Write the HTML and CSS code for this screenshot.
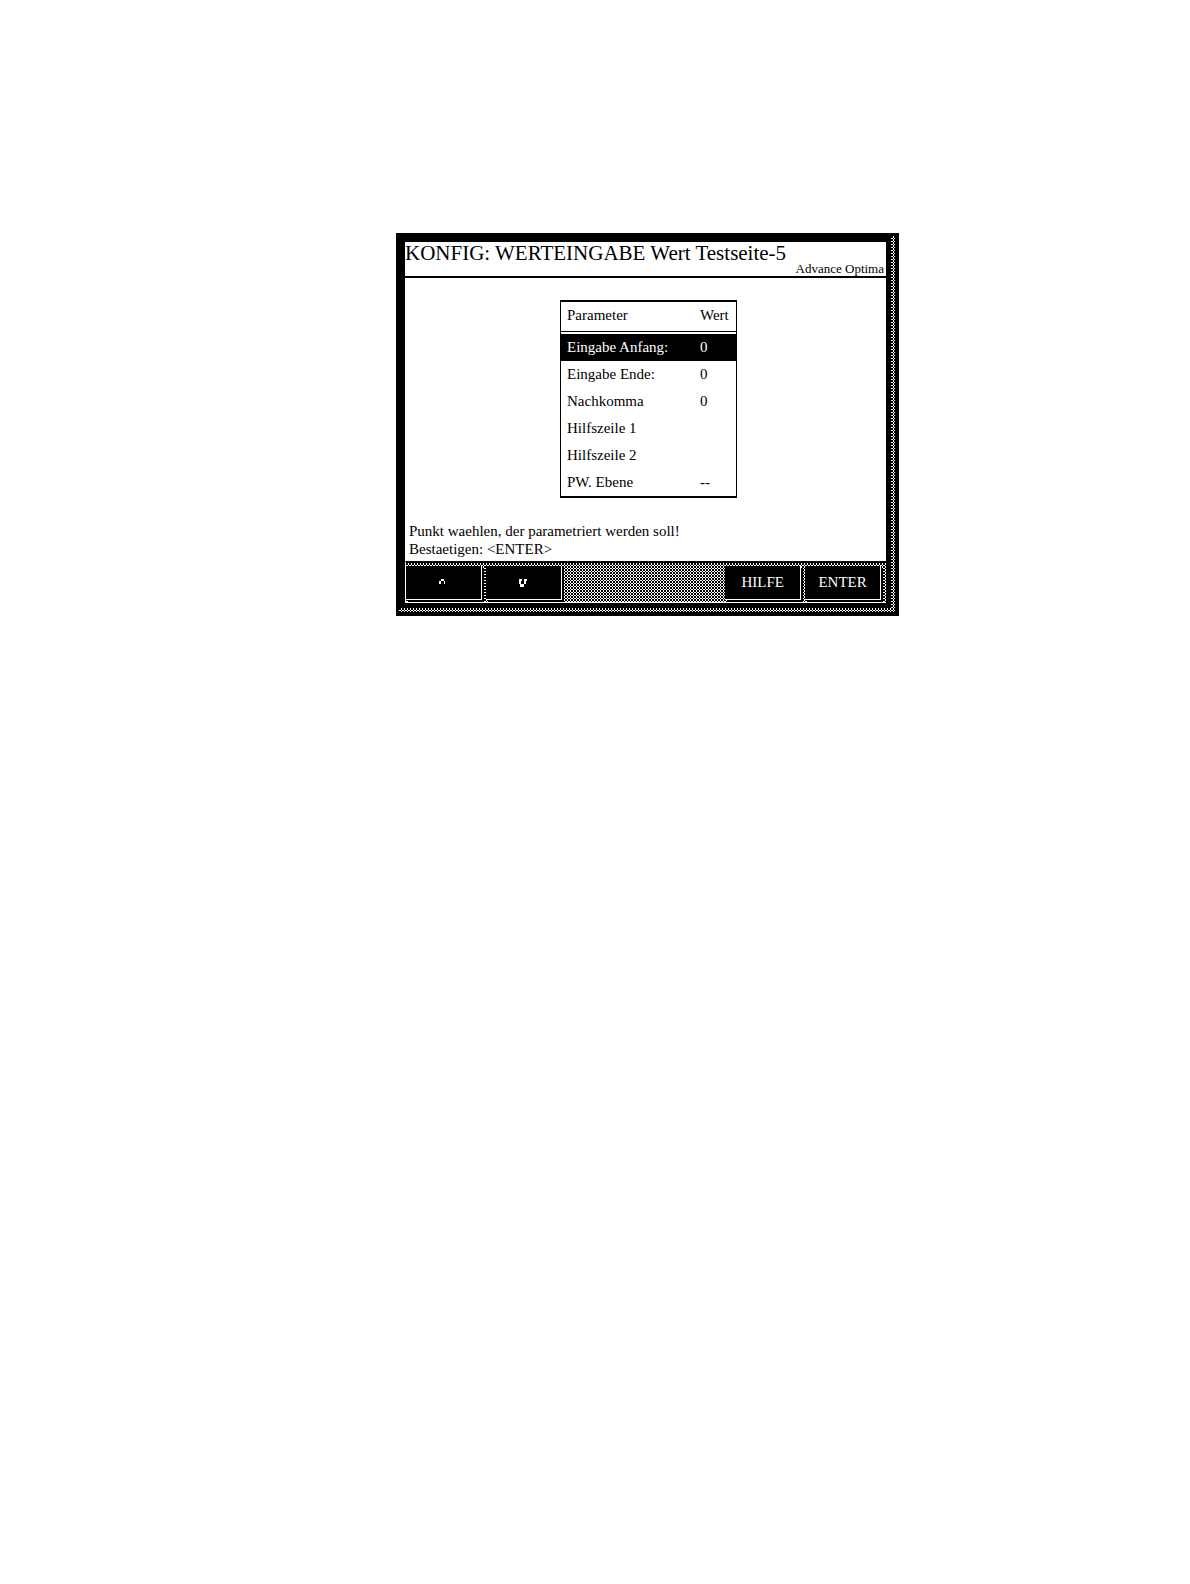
FILE: index.html
```
<!DOCTYPE html>
<html lang="de">
<head>
  <meta charset="UTF-8" />
  <meta name="viewport" content="width=device-width, initial-scale=1.0"/>
  <title>KONFIG: WERTEINGABE</title>
  <link rel="stylesheet" href="styles.css">
</head>
<body>
  <main class="terminal">
    <div class="bezel">
      <div class="screen">
        <header class="titlebar">
          <h1>KONFIG: WERTEINGABE Wert Testseite-5</h1>
          <span class="brand">Advance Optima</span>
        </header>

        <section class="content">
          <table class="params">
            <thead>
              <tr><th scope="col">Parameter</th><th scope="col">Wert</th></tr>
            </thead>
            <tbody>
              <tr class="selected"><td>Eingabe Anfang:</td><td>0</td></tr>
              <tr><td>Eingabe Ende:</td><td>0</td></tr>
              <tr><td>Nachkomma</td><td>0</td></tr>
              <tr><td>Hilfszeile 1</td><td></td></tr>
              <tr><td>Hilfszeile 2</td><td></td></tr>
              <tr><td>PW. Ebene</td><td>--</td></tr>
            </tbody>
          </table>
        </section>

        <p class="prompt">Punkt waehlen, der parametriert werden soll!<br>Bestaetigen: &lt;ENTER&gt;</p>

        <nav class="softkeys">
          <button type="button" aria-label="Hoch">
            <svg width="8" height="8" viewBox="0 0 8 8" shape-rendering="crispEdges"><path d="M2 0h3v2h1v3h-1v-3h-3v3h-2v-3h2z"/></svg>
          </button>
          <button type="button" aria-label="Runter">
            <svg class="down" width="8" height="8" viewBox="0 0 8 8" shape-rendering="crispEdges"><path d="M0 0h3v2h-1v3h3v-3h0v-2h3v2h-1v3h-2v3h-4v-3h-1z"/></svg>
          </button>
          <button type="button" class="help">HILFE</button>
          <button type="button">ENTER</button>
        </nav>
      </div>
    </div>
  </main>
</body>
</html>
```
FILE: styles.css
```
* {
  box-sizing: border-box;
}

body {
  margin: 0;
  padding-top: 233px;
  background: white;
  color: black;
  font-family: "Liberation Serif", serif;
  font-size: 15px;
  display: grid;
  grid-template-columns: 396fr 503fr 291fr;
}

.terminal {
  grid-column: 2;
  background: black;
  padding: 3px 4px 4px 3px;
}

/* dithered shadow on the right and bottom edge */
.bezel,
.softkeys {
  background: repeating-conic-gradient(at 2px 2px, white 0% 25%, black 0% 50%) 0 0 / 3px 3px;
}

.bezel {
  padding: 0 4px 4px 0;
}

.screen {
  border: 6px solid black;
  border-width: 6px 5px 5px 6px;
  background: white;
}

.titlebar {
  display: flex;
  justify-content: space-between;
  height: 36px;
  border-bottom: 2px solid black;
}

h1 {
  margin: 0;
  font-size: 21px;
  font-weight: normal;
  line-height: 23px;
  white-space: nowrap;
}

.brand {
  align-self: flex-end;
  flex: none;
  margin-left: -40px;
  padding-right: 2px;
  font-size: 13px;
  line-height: 14px;
}

.content {
  display: flex;
  justify-content: center;
  padding: 22px 0 20px 6px;
}

.params {
  width: 177px;
  border: 2px solid black;
  border-width: 2px 1px 2px 1px;
  border-collapse: separate;
  border-spacing: 0;
}

.params th,
.params td {
  height: 27px;
  padding: 0 6px;
  font-weight: normal;
  text-align: left;
}

.params th {
  height: 30px;
  padding-bottom: 2px;
  border-bottom: 1px solid black;
}

.params th:last-child,
.params td:last-child {
  width: 42px;
}

/* white gap between header rule and rows */
.params thead::after {
  content: "";
  display: table-row;
  height: 2px;
}

.selected {
  background: black;
  color: white;
}

.prompt {
  margin: 0;
  padding: 4px 4px 3px;
  line-height: 18px;
}

.softkeys {
  display: grid;
  grid-template-columns: repeat(6, 1fr);
  gap: 4px;
  padding: 3px 5px 2px 0;
  border-top: 2px solid black;
  border-bottom: 1px solid white;
  border-left: 1px solid white;
}

.softkeys button {
  height: 34px;
  padding: 0;
  border: 0;
  border-right: 1px solid white;
  border-bottom: 1px solid white;
  box-shadow: 2px 2px 0 black;
  background: black;
  color: white;
  font: inherit;
}

.softkeys svg {
  display: block;
  margin: 0 auto;
  fill: white;
}

.softkeys .help {
  grid-column: 5;
}
```
